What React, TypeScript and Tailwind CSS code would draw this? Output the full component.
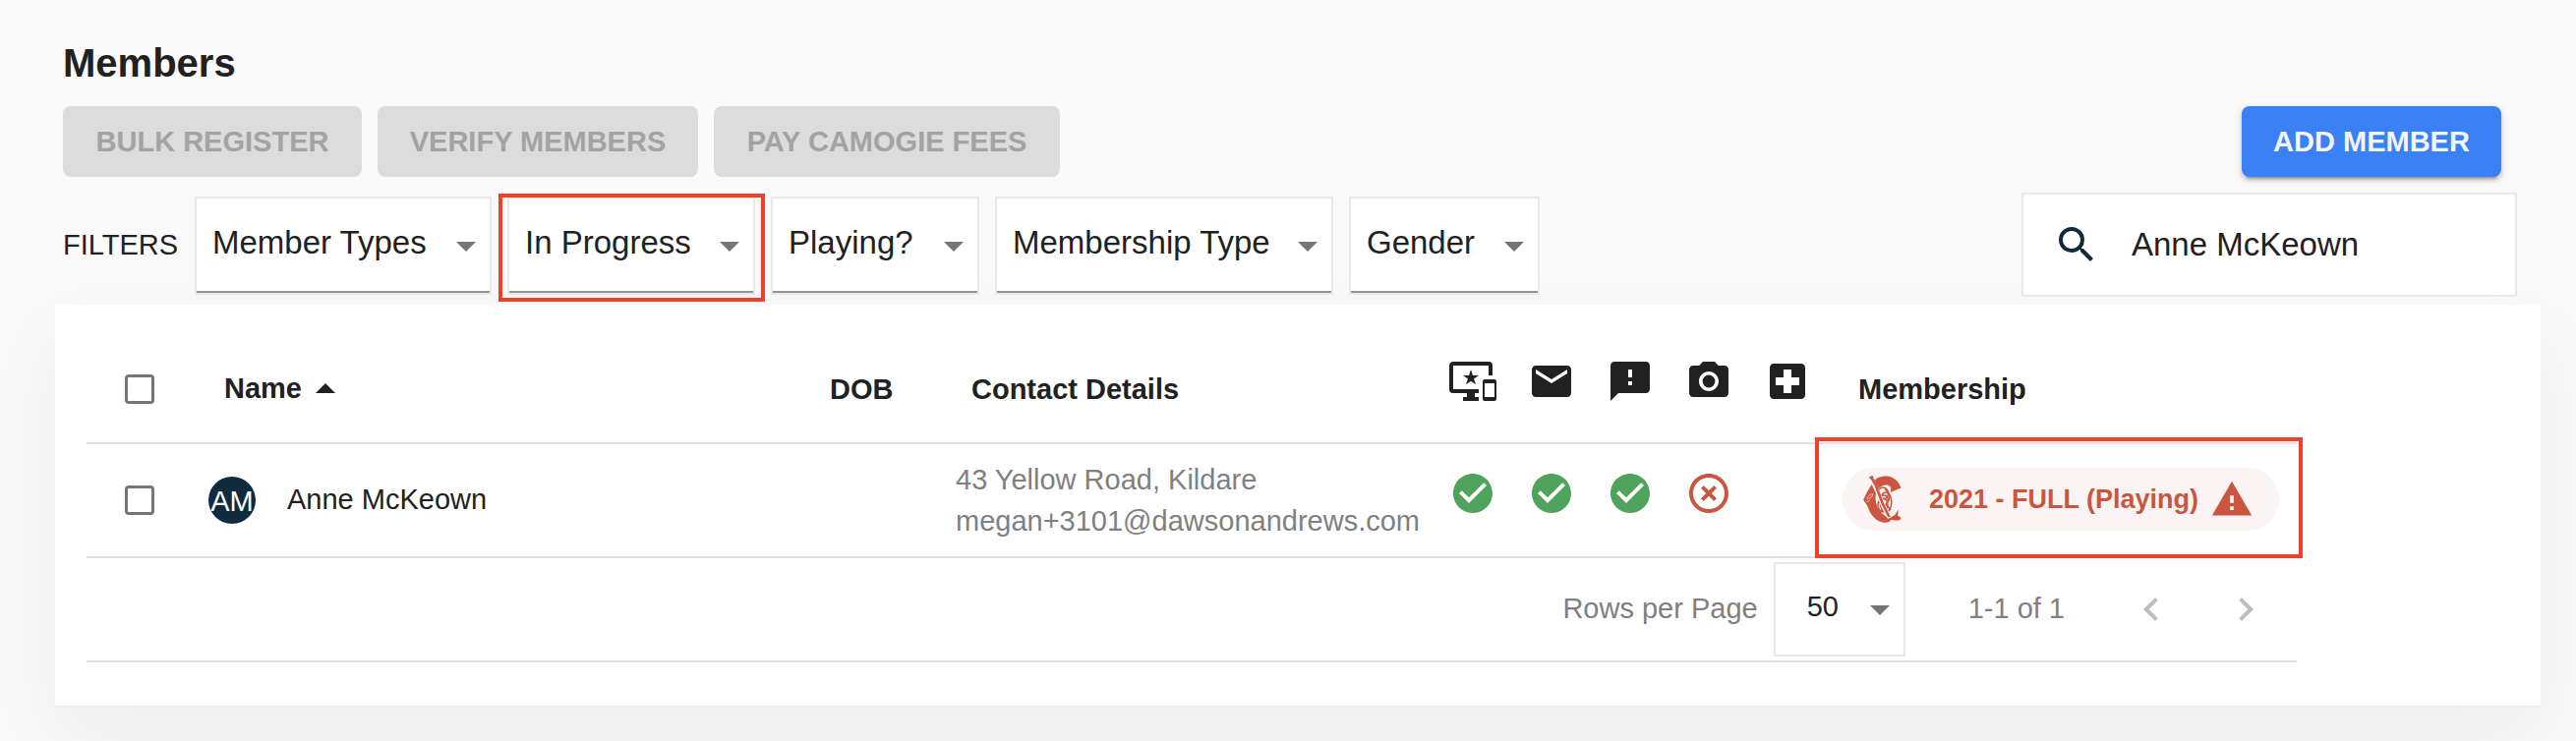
import { useState } from "react";
import type { ReactNode } from "react";
import {
  MdArrowDropDown,
  MdArrowDropUp,
  MdCheckCircle,
  MdChevronLeft,
  MdChevronRight,
  MdEmail,
  MdFeedback,
  MdHighlightOff,
  MdImportantDevices,
  MdLocalHospital,
  MdPhotoCamera,
  MdSearch,
} from "react-icons/md";

function DisabledAction({ width, children }: { width: string; children: ReactNode }) {
  return (
    <button
      type="button"
      disabled
      className={`h-[72px] rounded-lg bg-[#dcdcdc] pt-0.5 font-bold whitespace-nowrap text-[#a3a3a3] ${width}`}
    >
      {children}
    </button>
  );
}

function Filter({ label, width, highlighted }: { label: string; width: string; highlighted?: boolean }) {
  return (
    <div className={`relative h-[100px] border-2 border-[#e8e8e8] bg-white ${width}`}>
      <select
        aria-label={label}
        className="h-full w-full appearance-none border-b-2 border-[#949494] bg-transparent pb-1 pl-4 text-[33px] text-[#212121] outline-none"
      >
        <option>{label}</option>
      </select>
      <MdArrowDropDown className="pointer-events-none absolute top-6 right-0 size-12 text-[#757575]" />
      {highlighted && (
        <span className="pointer-events-none absolute -top-[5px] -right-3 -bottom-[9px] -left-[11px] border-4 border-[#ef4029]" />
      )}
    </div>
  );
}

function Tick({ label }: { label: string }) {
  return (
    <input
      type="checkbox"
      aria-label={label}
      className="mx-auto block size-[30px] appearance-none rounded-sm border-3 border-[#757575] bg-white checked:bg-[#757575]"
    />
  );
}

function WarningIcon() {
  return (
    <svg viewBox="0 0 24 24" className="size-11 shrink-0" fill="currentColor" aria-hidden="true">
      <path d="M1 21h22L12 2 1 21zm12-3h-2v-2h2v2zm0-4h-2v-4h2v4z" />
    </svg>
  );
}

function Crest() {
  return (
    <svg viewBox="0 0 39 48" className="h-12 w-[39px] shrink-0" fill="none" aria-hidden="true">
      <path
        fill="#cb5640"
        d="M38.5 12.5C36 6 31 .8 24 .6 18 .4 13 2.5 10 6.500L3.800 17 .2 24.500 4.500 31C6.500 38.500 12 46 20.500 47.700 25 48 28.500 46.500 28.500 44 23 42 17.500 38 14.500 32 12 26 12 19 14.500 14.500 17 11 20 9.500 24 9.500 28 9.800 29 12.500 27.500 17z"
      />
      <path fill="#cb5640" d="M22 41C26 44 30 42 32.500 39.500L36 34.500 35 40.500 38.300 42.500C39 45 36 46 32.500 45.500L26 44.500z" />
      <g stroke="#cb5640" strokeWidth="1.5">
        <ellipse cx="20" cy="18" rx="5.500" ry="6" />
        <ellipse cx="23" cy="27" rx="5.800" ry="10" />
        <ellipse cx="20" cy="30" rx="5" ry="7" />
        <path d="M17 22c5-4 9-1 8 4s-7 6-7 11M16 27c4 1 9 3 12 8M22 14c5 2 6 8 3 13" />
      </g>
      <path d="M8.500 3.500 14 15 21 32 27 43" stroke="#faf4f4" strokeWidth="4.500" />
      <path d="M8.500 2 12.500 9 20 29 26.500 42" stroke="#cb5640" strokeWidth="2.600" />
      <path d="M6.500 2.500 10 .8" stroke="#cb5640" strokeWidth="2.400" />
      <path d="M4 24c1-4 4-6 6-5-1 3-3 4-4.500 4.500M3.500 27l3-2" stroke="#faf4f4" strokeWidth=".7" />
    </svg>
  );
}

const statusColumns = [
  { label: "Registered", icon: MdImportantDevices, ok: true },
  { label: "Email", icon: MdEmail, ok: true },
  { label: "Notices", icon: MdFeedback, ok: true },
  { label: "Photo", icon: MdPhotoCamera, ok: false },
  { label: "Medical", icon: MdLocalHospital, ok: null },
];

export default function App() {
  const [query, setQuery] = useState("Anne McKeown");

  return (
    <main className="min-h-screen bg-[linear-gradient(to_bottom,#f9f9f9,#fafafa_33px)] pt-10 pr-9 pb-[34px] pl-14 font-['Liberation_Sans',Arial,sans-serif] text-[29px] text-[#212121]">
      <h1 className="pl-2 text-[40px] leading-[48px] font-bold">Members</h1>

      <div className="mt-5 flex items-center justify-between pr-10 pl-2">
        <div className="flex gap-4">
          <DisabledAction width="w-[304px]">BULK REGISTER</DisabledAction>
          <DisabledAction width="w-[326px]">VERIFY MEMBERS</DisabledAction>
          <DisabledAction width="w-[352px]">PAY CAMOGIE FEES</DisabledAction>
        </div>
        <button
          type="button"
          className="h-[72px] w-[264px] rounded-lg bg-[#3b80f5] pt-0.5 font-bold whitespace-nowrap text-[#f2f6ff] shadow-[0_6px_2px_-4px_rgba(0,0,0,0.2),0_4px_4px_rgba(0,0,0,0.14),0_2px_10px_rgba(0,0,0,0.12)]"
        >
          ADD MEMBER
        </button>
      </div>

      <div className="mt-4 flex items-start justify-between pr-6 pl-2">
        <div className="flex items-center gap-4 pt-1">
          <span className="w-[118px]">FILTERS</span>
          <Filter label="Member Types" width="w-[302px]" />
          <Filter label="In Progress" width="w-[252px]" highlighted />
          <Filter label="Playing?" width="w-[212px]" />
          <Filter label="Membership Type" width="w-[344px]" />
          <Filter label="Gender" width="w-[194px]" />
        </div>
        <label className="flex h-[106px] w-[504px] items-center border-2 border-[#e8e8e8] bg-white pl-[30px]">
          <MdSearch className="size-12 shrink-0 text-[#0f2b3d]" />
          <input
            type="text"
            aria-label="Search members"
            value={query}
            onChange={(event) => setQuery(event.target.value)}
            className="ml-8 min-w-0 flex-1 bg-transparent text-[33px] outline-none"
          />
        </label>
      </div>

      <section className="mt-2 border-b-2 border-[#ebebeb] bg-white px-8 pt-8 pb-11 shadow-[0_32px_80px_rgba(0,0,0,0.05)]">
        <table className="w-full max-w-[2248px] table-fixed border-separate border-spacing-0">
          <colgroup>
            <col className="w-[108px]" />
            <col />
            <col className="w-[144px]" />
            <col className="w-[502px]" />
            <col className="w-[80px]" />
            <col className="w-[80px]" />
            <col className="w-[80px]" />
            <col className="w-[80px]" />
            <col className="w-[80px]" />
            <col className="w-[478px]" />
          </colgroup>
          <thead>
            <tr className="h-[110px] text-left *:border-b-2 *:border-[#e0e0e0]">
              <th>
                <Tick label="Select all members" />
              </th>
              <th className="pl-8">
                <button type="button" className="flex items-center font-bold">
                  Name
                  <MdArrowDropUp className="size-12" />
                </button>
              </th>
              <th className="pt-0.5 pl-8">DOB</th>
              <th className="pt-0.5 pl-8">Contact Details</th>
              {statusColumns.map(({ label, icon: Icon }) => (
                <th key={label} aria-label={label} className="pb-4 pl-4">
                  <Icon className="size-12" />
                </th>
              ))}
              <th className="pt-0.5 pl-8">Membership</th>
            </tr>
          </thead>
          <tbody>
            <tr className="h-[116px] *:border-b-2 *:border-[#e0e0e0]">
              <td>
                <Tick label="Select Anne McKeown" />
              </td>
              <td className="pl-4">
                <div className="flex items-center gap-8">
                  <span className="flex size-12 items-center justify-center rounded-full bg-[#0f2b3d] pt-1 text-white">AM</span>
                  Anne McKeown
                </div>
              </td>
              <td />
              <td className="pl-4 leading-[42px] whitespace-nowrap text-[#808080]">
                43 Yellow Road, Kildare
                <br />
                megan+3101@dawsonandrews.com
              </td>
              {statusColumns.map(({ label, ok }) => (
                <td key={label} className="pb-3.5 pl-4">
                  {ok === true && <MdCheckCircle className="size-12 text-[#50a35c]" />}
                  {ok === false && <MdHighlightOff className="size-12 text-[#cb5640]" />}
                </td>
              ))}
              <td className="relative pb-0.5 pl-4">
                <div className="flex h-16 w-[444px] items-center rounded-full bg-[#faf4f4] pl-[21px] text-[27px] font-bold text-[#cb5640]">
                  <Crest />
                  <span className="ml-7 flex-1 whitespace-nowrap">2021 - FULL (Playing)</span>
                  <span className="mr-[26px]">
                    <WarningIcon />
                  </span>
                </div>
                <span className="pointer-events-none absolute -top-[7px] -right-[6px] -bottom-[2px] -left-3 border-4 border-[#ef4029]" />
              </td>
            </tr>
          </tbody>
          <tfoot>
            <tr>
              <td colSpan={10} className="border-b-2 border-[#e0e0e0] py-1">
                <div className="flex items-center justify-end pr-1 text-[#808080]">
                  <label htmlFor="page-size">Rows per Page</label>
                  <div className="relative ml-4 h-24 w-[134px] border-2 border-[#e8e8e8]">
                    <select
                      id="page-size"
                      className="h-full w-full appearance-none bg-transparent pb-1 pl-8 text-[#212121] outline-none"
                    >
                      <option>50</option>
                    </select>
                    <MdArrowDropDown className="pointer-events-none absolute top-[22px] right-0 size-12 text-[#757575]" />
                  </div>
                  <span className="mr-10 ml-16">1-1 of 1</span>
                  <button type="button" disabled aria-label="Previous page" className="flex size-24 items-center justify-center text-[#bdbdbd]">
                    <MdChevronLeft className="size-12" />
                  </button>
                  <button type="button" disabled aria-label="Next page" className="flex size-24 items-center justify-center text-[#bdbdbd]">
                    <MdChevronRight className="size-12" />
                  </button>
                </div>
              </td>
            </tr>
          </tfoot>
        </table>
      </section>
    </main>
  );
}
